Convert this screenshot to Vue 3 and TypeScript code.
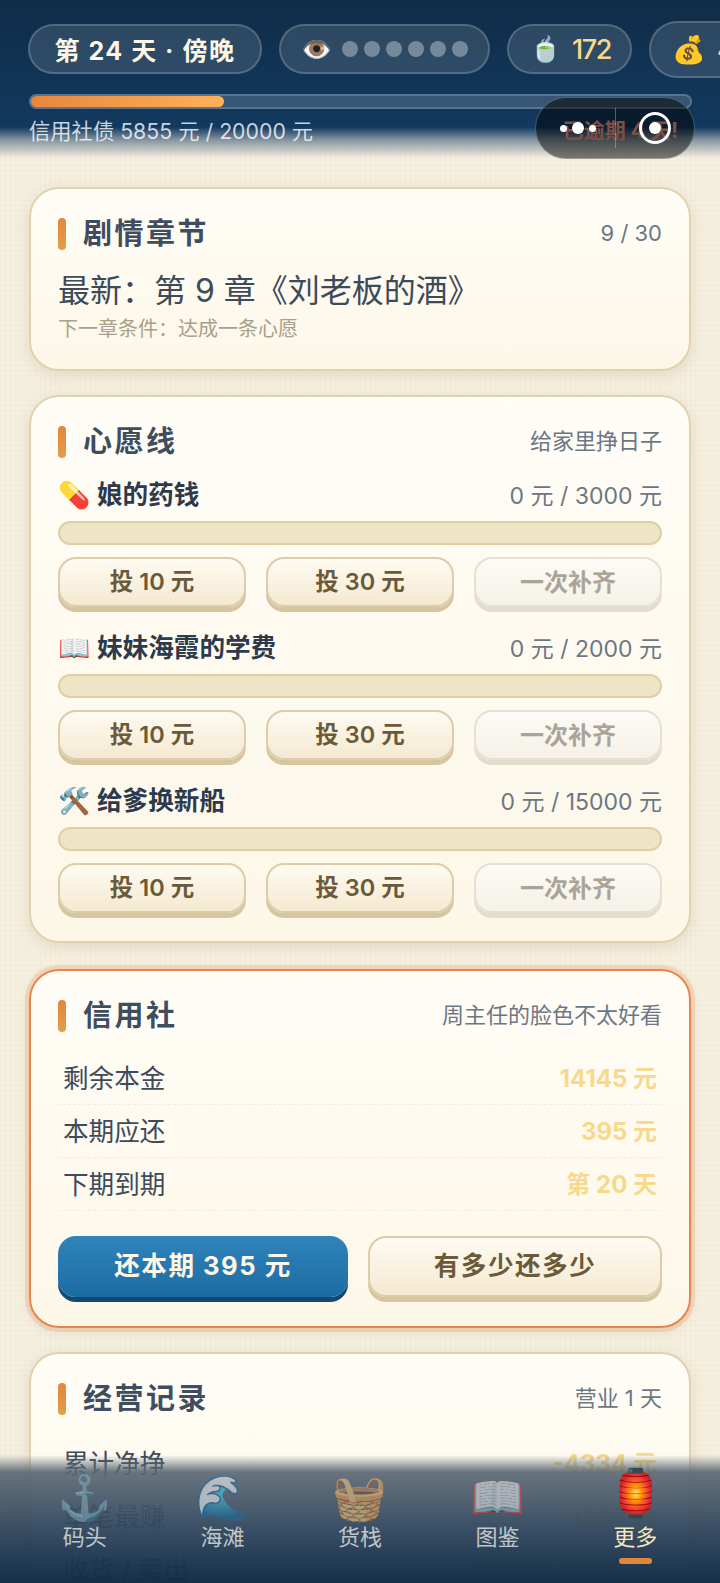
<script setup lang="ts">
interface Wish { icon: string; name: string; value: string }
interface Row { label: string; value: string }
const dots: number[] = [1, 2, 3, 4, 5, 6]
const wishes: Wish[] = [
  { icon: '💊', name: '娘的药钱', value: '0 元 / 3000 元' },
  { icon: '📖', name: '妹妹海霞的学费', value: '0 元 / 2000 元' },
  { icon: '🛠️', name: '给爹换新船', value: '0 元 / 15000 元' },
]
const credit: Row[] = [
  { label: '剩余本金', value: '14145 元' },
  { label: '本期应还', value: '395 元' },
  { label: '下期到期', value: '第 20 天' },
]
const record: Row[] = [
  { label: '累计净挣', value: '-4334 元' },
  { label: '单笔最赚', value: '1269 元' },
  { label: '收货 / 卖出', value: '1182 条 / 1182 条' },
]
const tabs = [
  { icon: '⚓', label: '码头' },
  { icon: '🌊', label: '海滩' },
  { icon: '🧺', label: '货栈' },
  { icon: '📖', label: '图鉴' },
  { icon: '🏮', label: '更多', active: true },
]
</script>

<template>
  <div class="page">
    <header class="top">
      <div class="pills">
        <div class="pill day">第 24 天 · 傍晚</div>
        <div class="pill eye"><span class="emo">👁️</span><i v-for="d in dots" :key="d" class="dot"></i></div>
        <div class="pill gold"><span class="emo">🍵</span><span class="num">172</span></div>
        <div class="pill gold big"><span class="emo">💰</span><span class="num">4334</span></div>
      </div>
      <div class="debt"><div class="debt-fill"></div></div>
      <div class="debt-row"><span>信用社债 5855 元 / 20000 元</span><span class="late">已逾期 4 天!</span></div>
      <div class="capsule">
        <div class="more"><b></b><b class="mid"></b><b></b></div>
        <div class="sep"></div>
        <div class="target"><b></b></div>
      </div>
    </header>

    <main class="main">
      <section class="card story">
        <div class="head"><h2>剧情章节</h2><span>9 / 30</span></div>
        <p class="latest">最新：第 9 章《刘老板的酒》</p>
        <p class="next">下一章条件：达成一条心愿</p>
      </section>

      <section class="card">
        <div class="head"><h2>心愿线</h2><span>给家里挣日子</span></div>
        <div v-for="w in wishes" :key="w.name" class="wish">
          <div class="wish-top"><strong><span class="emo">{{ w.icon }}</span><span>{{ w.name }}</span></strong><span>{{ w.value }}</span></div>
          <div class="track"></div>
          <div class="btns">
            <button>投 10 元</button>
            <button>投 30 元</button>
            <button class="off">一次补齐</button>
          </div>
        </div>
      </section>

      <section class="card alert">
        <div class="head"><h2>信用社</h2><span>周主任的脸色不太好看</span></div>
        <div v-for="r in credit" :key="r.label" class="row"><span>{{ r.label }}</span><b>{{ r.value }}</b></div>
        <div class="pay">
          <button class="primary">还本期 395 元</button>
          <button class="wide">有多少还多少</button>
        </div>
      </section>

      <section class="card record">
        <div class="head"><h2>经营记录</h2><span>营业 1 天</span></div>
        <div v-for="r in record" :key="r.label" class="row"><span>{{ r.label }}</span><b>{{ r.value }}</b></div>
      </section>
    </main>

    <nav class="tabs">
      <div v-for="t in tabs" :key="t.label" class="tab" :class="{ on: t.active }">
        <span class="tab-emo">{{ t.icon }}</span>
        <span>{{ t.label }}</span>
        <i v-if="t.active" class="bar"></i>
      </div>
    </nav>
  </div>
</template>

<style>
html, body { margin: 0; background: #f5efdf; }
</style>

<style scoped>
.page {
  position: relative; width: 720px; height: 1583px; overflow: hidden;
  font-family: Inter, "Noto Sans CJK SC", sans-serif; color: #3d4a5a;
  background-color: #f5efdf;
  background-image: linear-gradient(rgba(160,130,80,.03) 1px, transparent 1px), linear-gradient(90deg, rgba(160,130,80,.03) 1px, transparent 1px);
  background-size: 5px 5px;
}
.emo { font-size: 25px; }
.top {
  position: absolute; left: 0; top: 0; right: 0; height: 158px; z-index: 3; padding: 20px 0 0 28px; box-sizing: border-box;
  background: linear-gradient(180deg, #102c47 0, #12395f 127px, rgba(60,90,120,.6) 140px, rgba(245,239,223,0) 158px);
}
.pills { display: flex; align-items: center; gap: 17px; height: 58px; white-space: nowrap; }
.pill { flex: none; display: flex; align-items: center; gap: 10px; height: 50px; box-sizing: border-box; padding: 0 20px; border: 2px solid rgba(255,255,255,.18); border-radius: 25px; background: rgba(255,255,255,.12); color: #fff7e6; font-size: 25px; }
.day { font-weight: 700; width: 234px; justify-content: center; padding: 0; letter-spacing: 1.5px; }
.eye { width: 211px; }
.gold { color: #f8d98a; width: 125px; gap: 11px; padding: 0 0 0 21px; }
.num { font-size: 27px; font-weight: 500; letter-spacing: -1.5px; }
.big { height: 57px; border-radius: 29px; width: 140px; }
.big .emo { font-size: 27px; }
.dot { width: 16px; height: 16px; border-radius: 50%; background: rgba(255,255,255,.35); margin-left: -4px; flex: none; }
.dot:first-of-type { margin-left: 0; }
.debt { height: 15px; margin: 16px 28px 0 1px; border: 2px solid rgba(255,255,255,.18); border-radius: 8px; background: rgba(255,255,255,.16); box-sizing: border-box; }
.debt-fill { width: 29.3%; height: 100%; background: linear-gradient(90deg, #e8873a, #ffb05a); border-radius: 6px; }
.debt-row { display: flex; justify-content: space-between; margin: 5px 42px 0 1px; font-size: 21.3px; color: rgba(255,255,255,.78); }
.late { color: #f9a08c; font-weight: 700; font-size: 21px; }
.capsule { position: absolute; left: 535px; top: 97px; width: 160px; height: 62px; box-sizing: border-box; border: 1px solid rgba(255,255,255,.25); border-radius: 31px; background: rgba(0,0,0,.5); display: flex; align-items: center; }
.more { width: 79px; display: flex; gap: 5px; align-items: center; justify-content: center; padding-left: 4px; box-sizing: border-box; }
.more b { width: 7px; height: 7px; border-radius: 50%; background: #fff; }
.more .mid { width: 12px; height: 12px; }
.sep { width: 1px; height: 40px; background: rgba(255,255,255,.3); }
.target { flex: 1; display: flex; justify-content: center; }
.target b { width: 32px; height: 32px; box-sizing: border-box; border: 3px solid #fff; border-radius: 50%; }
.target b::after { content: ""; display: block; width: 12px; height: 12px; margin: 7px; border-radius: 50%; background: #fff; }

.main { padding: 187px 29px 0; }
.card { box-sizing: border-box; margin-bottom: 26px; padding: 29px 27px 28px; border: 2px solid #e0d2ad; border-radius: 30px; background: linear-gradient(180deg, #fffdf7, #fdf7e8); box-shadow: 0 4px 14px rgba(140,110,60,.16); }
.story { padding-bottom: 26px; margin-bottom: 24px; }
.head { display: flex; align-items: flex-start; justify-content: space-between; height: 32px; }
.head h2 { margin: 0; padding-left: 25px; position: relative; font-size: 29px; line-height: 32px; font-weight: 700; letter-spacing: 2.5px; color: #3f4d5e; }
.head h2::before { content: ""; position: absolute; left: 0; top: 0; width: 8px; height: 32px; border-radius: 4px; background: linear-gradient(180deg, #e48639, #e0a04a); }
.head span { font-size: 22px; line-height: 31px; color: #6b7785; }
.latest { margin: 19px 0 0; font-size: 32px; line-height: 44px; color: #3d4a5a; }
.next { margin: 2px 0 0; font-size: 20px; line-height: 28px; color: #a9a08a; }
.wish { margin-top: 25px; }
.head + .wish { margin-top: 21px; }
.wish-top { display: flex; align-items: center; justify-content: space-between; height: 30px; }
.wish-top strong { display: flex; align-items: center; gap: 7px; font-size: 25.6px; line-height: 26px; padding-top: 2px; font-weight: 700; color: #2d3a4c; }
.wish-top strong .emo { font-size: 26px; }
.wish-top > span { font-size: 23px; color: #6b7785; }
.track { height: 24px; margin-top: 12px; box-sizing: border-box; border: 2px solid #dfcfa5; border-radius: 12px; background: #f0e4c6; }
.btns { display: grid; grid-template-columns: repeat(3, 1fr); gap: 20px; margin-top: 12px; }
button { font-family: inherit; height: 50px; box-sizing: border-box; padding: 0 0 4px; border: 2px solid #dcccaa; border-radius: 18px; background: linear-gradient(180deg, #fffbf2, #f4e9d1); box-shadow: 0 5px 0 #d6c59f; color: #6a5a3a; font-size: 23.5px; font-weight: 600; }
button.off { color: #aaa498; border-color: #e5e0d4; background: linear-gradient(180deg, #fdfbf6, #f5f1e8); box-shadow: 0 5px 0 #e3ddd0; font-size: 24px; }
.alert { border-color: #e5854a; box-shadow: 0 0 0 4px rgba(229,133,74,.22), 0 4px 12px rgba(140,110,60,.12); padding-bottom: 29px; margin-bottom: 24px; }
.row { display: flex; justify-content: space-between; align-items: center; height: 53px; box-sizing: border-box; padding: 0 5px 4px; border-bottom: 1px dashed #f2ebd9; font-size: 25.6px; }
.head + .row { margin-top: 20px; }
.record .head + .row { margin-top: 22px; }
.row b { font-weight: 700; color: #f8d98a; font-size: 24px; }
.pay { display: flex; gap: 20px; margin-top: 25px; }
.pay button { height: 61px; padding-bottom: 6px; font-size: 25.6px; letter-spacing: 1.5px; flex: 1; font-weight: 700; }
.pay .primary { background: linear-gradient(180deg, #2f84ba, #1c6ca4); border: none; color: #fff7e6; box-shadow: 0 5px 0 #14496f; flex: none; width: 290px; }

.tabs { position: absolute; left: 0; right: 0; bottom: 0; height: 128px; z-index: 3; display: flex; padding: 16px 16px 0; box-sizing: border-box; background: linear-gradient(180deg, rgba(90,100,112,0) 0, rgba(92,104,116,.92) 17px, rgba(45,68,92,.95) 60%, rgba(15,44,70,.98) 100%); color: #d5d8da; font-size: 22px; }
.tab { flex: 1; display: flex; flex-direction: column; align-items: center; line-height: 28px; color: rgba(240,240,235,.75); }
.tab-emo { font-size: 44px; line-height: 52px; opacity: .72; }
.on { color: #f8e6ba; }
.on .tab-emo { opacity: 1; transform: translateY(-5px) scale(1.05); }
.bar { width: 33px; height: 6px; border-radius: 3px; background: #e48639; margin-top: 7px; }
</style>
